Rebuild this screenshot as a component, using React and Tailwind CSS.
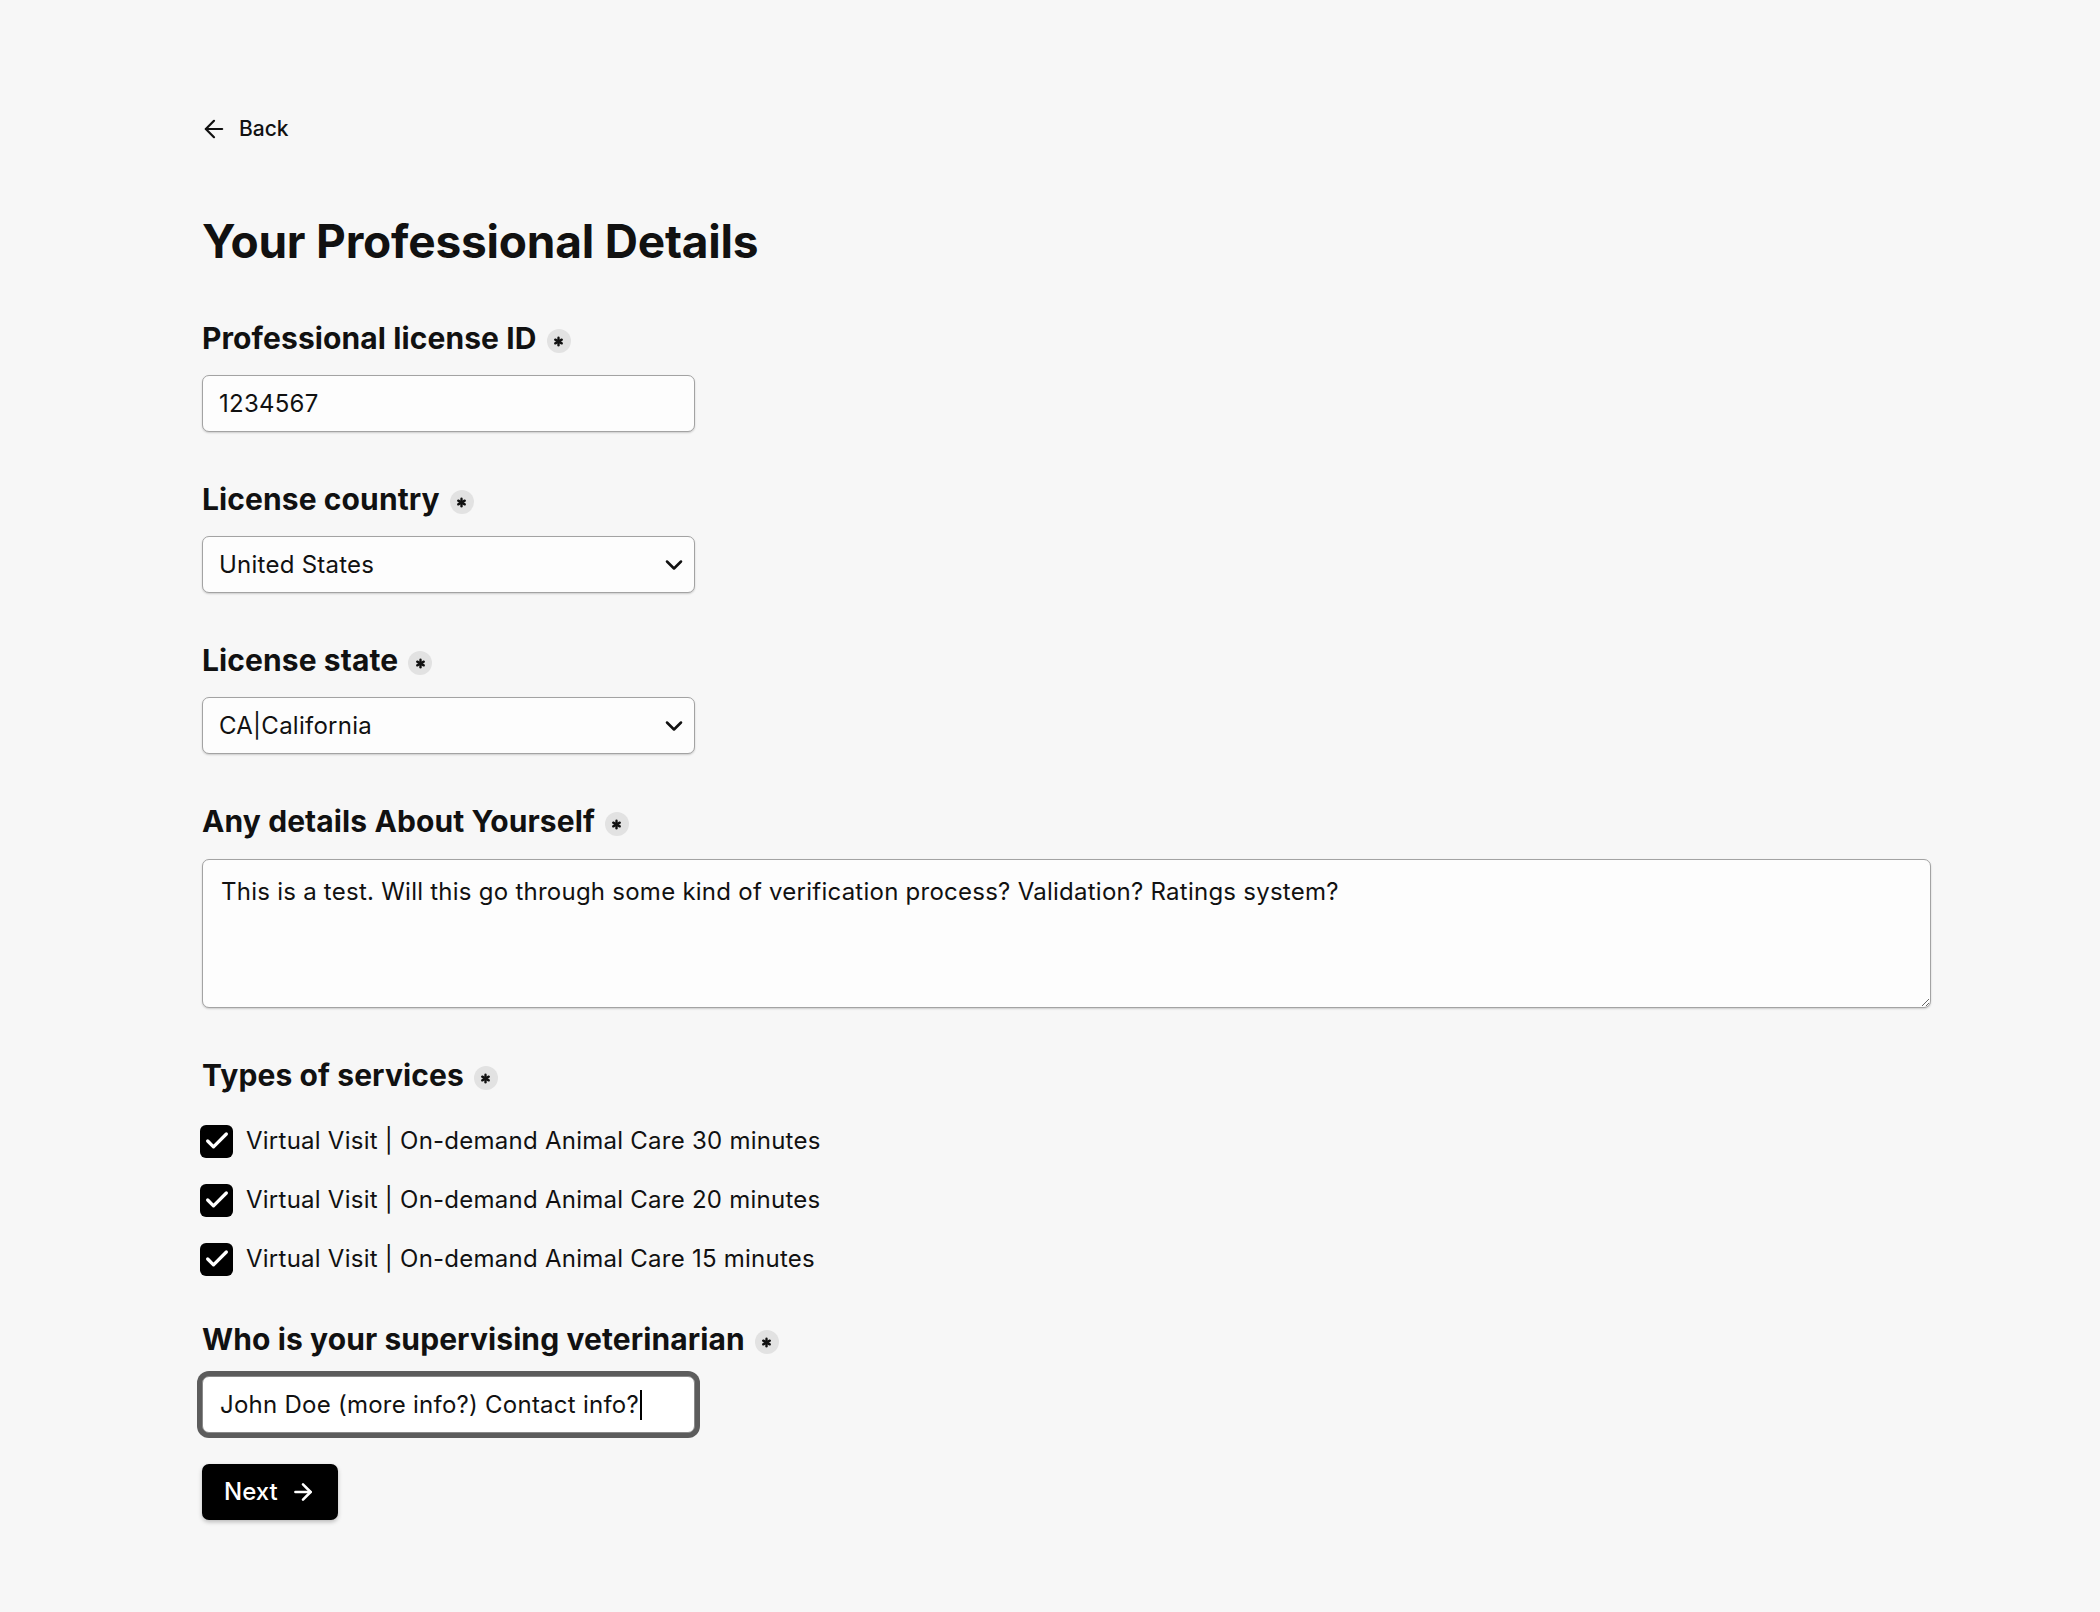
import { ArrowLeft, ArrowRight, Asterisk, Check, ChevronDown } from 'lucide-react';

const font = { fontFamily: 'Inter, "Noto Sans", sans-serif' };

function Required() {
  return (
    <span className="ml-[10px] mt-[6px] flex h-[24px] w-[24px] items-center justify-center rounded-full bg-[#e2e2e2]">
      <Asterisk size={15} strokeWidth={3.8} color="#111" />
    </span>
  );
}

function Label({ children }) {
  return (
    <div className="flex h-[36px] items-center text-[30px] font-bold leading-[36px] tracking-[0.1px] text-[#111]">
      <span>{children}</span>
      <Required />
    </div>
  );
}

function SelectBox({ value }) {
  return (
    <div className="flex h-[57px] w-[493px] items-center justify-between rounded-[7px] border border-[#a3a3a3] bg-[#fdfdfd] pl-[16px] pr-[6px] text-[24px] tracking-[0.25px] text-[#111] shadow-[0_1px_2px_rgba(0,0,0,0.18)]">
      <span>{value}</span>
      <ChevronDown size={28} strokeWidth={2.2} color="#111" />
    </div>
  );
}

const services = [
  'Virtual Visit | On-demand Animal Care 30 minutes',
  'Virtual Visit | On-demand Animal Care 20 minutes',
  'Virtual Visit | On-demand Animal Care 15 minutes',
];

export default function App() {
  return (
    <div className="min-h-screen bg-[#f7f7f7] text-[#111]" style={font}>
      <div className="pl-[202px] pr-[169px] pt-[115px] pb-[80px]">
        <a href="#" className="-ml-[2px] flex h-[28px] w-fit items-center gap-[11px] text-[21px] font-medium leading-[28px] text-[#111]">
          <ArrowLeft size={28} strokeWidth={1.9} />
          <span>Back</span>
        </a>

        <h1 className="mt-[71px] text-[46px] font-bold leading-[54px] tracking-[-0.2px] text-[#111]">
          Your Professional Details
        </h1>

        <div className="mt-[52px]">
          <Label>Professional license ID</Label>
          <div className="mt-[19px] flex h-[57px] w-[493px] items-center rounded-[7px] border border-[#a3a3a3] bg-[#fdfdfd] pl-[16px] text-[24px] tracking-[0.25px] text-[#111] shadow-[0_1px_2px_rgba(0,0,0,0.18)]">
            1234567
          </div>
        </div>

        <div className="mt-[49px]">
          <Label>License country</Label>
          <div className="mt-[19px]">
            <SelectBox value="United States" />
          </div>
        </div>

        <div className="mt-[49px]">
          <Label>License state</Label>
          <div className="mt-[19px]">
            <SelectBox value="CA|California" />
          </div>
        </div>

        <div className="mt-[49px]">
          <Label>Any details About Yourself</Label>
          <textarea
            className="mt-[20px] block h-[149px] w-full rounded-[7px] border border-[#a3a3a3] bg-[#fdfdfd] px-[18px] pt-[14px] text-[24px] leading-[36px] tracking-[0.25px] text-[#111] shadow-[0_1px_2px_rgba(0,0,0,0.18)] outline-none"
            defaultValue="This is a test. Will this go through some kind of verification process? Validation? Ratings system?"
          />
        </div>

        <div className="mt-[49px]">
          <Label>Types of services</Label>
          <div className="mt-[30px] flex flex-col gap-[23px]">
            {services.map((s) => (
              <div key={s} className="-ml-[2px] flex h-[36px] items-center gap-[13px] text-[24px] leading-[36px] tracking-[0.25px]">
                <span className="flex h-[33px] w-[33px] items-center justify-center rounded-[6px] bg-black">
                  <Check size={28} strokeWidth={2.8} color="#fff" />
                </span>
                <span>{s}</span>
              </div>
            ))}
          </div>
        </div>

        <div className="mt-[44px]">
          <Label>Who is your supervising veterinarian</Label>
          <div className="mt-[19px] flex h-[57px] w-[493px] items-center rounded-[7px] border border-[#8a8a8a] bg-white pl-[17px] text-[24px] tracking-[0.25px] text-[#111] ring-[5px] ring-[#5c5c5c]">
            <span>John Doe (more info?) Contact info?</span>
            <span className="ml-[1px] h-[30px] w-[2px] bg-black" />
          </div>
        </div>

        <button className="mt-[31px] flex h-[56px] items-center gap-[12px] rounded-[7px] bg-black pl-[22px] pr-[22px] text-[24px] font-medium text-white shadow-[0_2px_4px_rgba(0,0,0,0.25)]">
          <span>Next</span>
          <ArrowRight size={26} strokeWidth={2.4} />
        </button>
      </div>
    </div>
  );
}
